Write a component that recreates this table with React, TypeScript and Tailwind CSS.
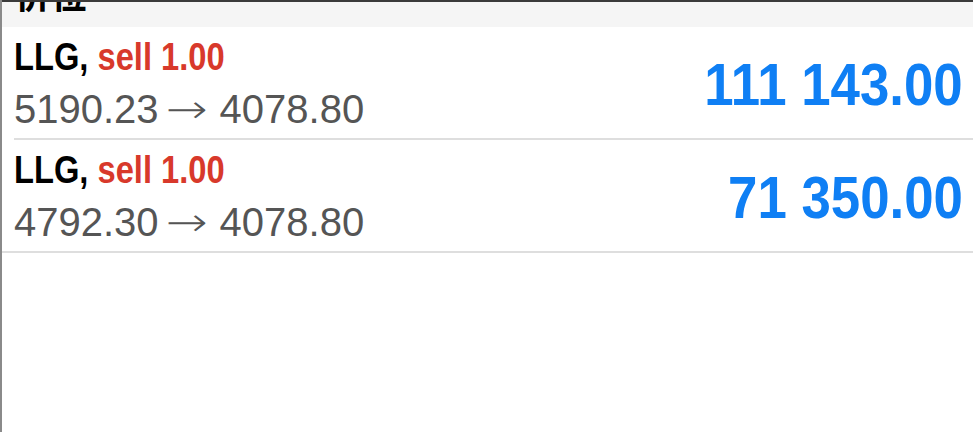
const positions = [
  { symbol: "LLG", side: "sell", volume: "1.00", open: "5190.23", current: "4078.80", profit: "111 143.00" },
  { symbol: "LLG", side: "sell", volume: "1.00", open: "4792.30", current: "4078.80", profit: "71 350.00" },
];

export default function App() {
  return (
    <div className="h-[432px] w-[973px] overflow-hidden bg-white border-l-2 border-[#8a8a8a] font-['Liberation_Sans','Noto_Sans_CJK_SC',sans-serif]">
      {/* 标题栏 */}
      <div className="h-[27px] overflow-hidden bg-[#f5f5f5] border-t-2 border-[#3a3a3a]">
        <div className="mt-[-25px] ml-[13px] text-[36px] font-bold leading-[40px] text-black">价位</div>
      </div>

      {positions.map((p, i) => (
        <div key={i} className={i === 0 ? "pl-[12px]" : ""}>
          <div
            className={
              "flex h-[113px] items-start justify-between border-b-2 border-[#dedede] pt-[10px] pr-[10px] " +
              (i === 0 ? "" : "pl-[12px]")
            }
          >
            <div className="flex flex-col">
              <div className="origin-left scale-x-[0.86] whitespace-nowrap text-[38px] font-bold leading-[40px] text-black">
                {p.symbol}, <span className="text-[#d8392b]">{p.side} {p.volume}</span>
              </div>
              <div className="mt-[11px] flex items-center gap-[12px] whitespace-nowrap text-[40px] leading-[42px] text-[#555555]">
                <span>{p.open}</span>
                <span className="-ml-[5px] inline-block w-[42px] origin-left scale-x-[1.25] font-['DejaVu_Sans',sans-serif] font-light">→</span>
                <span>{p.current}</span>
              </div>
            </div>
            <div className="mt-[16px] origin-right scale-x-[0.88] whitespace-nowrap text-[60px] font-bold leading-[64px] text-[#0f7ff4]">
              {p.profit}
            </div>
          </div>
        </div>
      ))}
    </div>
  );
}
